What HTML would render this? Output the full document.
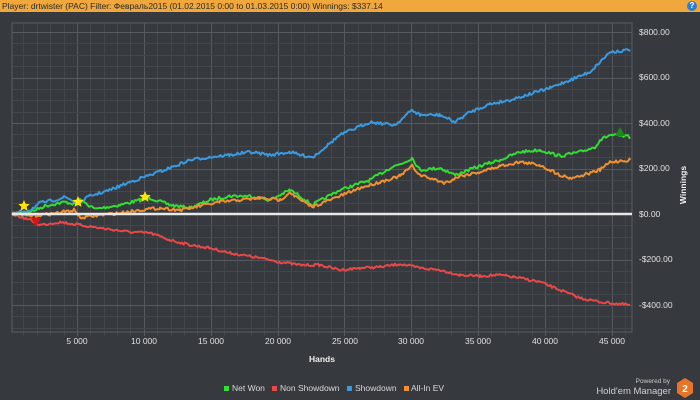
<!DOCTYPE html>
<html><head><meta charset="utf-8"><style>
html,body{margin:0;padding:0;width:700px;height:400px;overflow:hidden;background:#36393d;font-family:"Liberation Sans",sans-serif}
#bar{position:absolute;left:0;top:0;width:700px;height:12px;background:#f0a83c;font-size:8.5px;line-height:12px;color:#2a2a2a;padding-left:2px;white-space:nowrap}
#help{position:absolute;right:3px;top:1px;width:10px;height:10px;border-radius:50%;background:#2f7fd0;color:#fff;font-size:8px;line-height:10px;text-align:center;font-weight:bold}
svg{position:absolute;left:0;top:0}
</style></head><body>
<div id="bar">Player: drtwister (PAC) Filter: Февраль2015 (01.02.2015 0:00 to 01.03.2015 0:00) Winnings: $337.14</div>
<div id="help">?</div>
<svg width="700" height="400" id="s">
<g id="grid"></g>
<rect x="12" y="23" width="620" height="309" fill="none" stroke="#5a5e62" stroke-width="1"/>
<g id="lines" fill="none" stroke-width="2" stroke-linejoin="round"></g>
<line x1="12" y1="214" x2="632" y2="214" stroke="#e8e8e8" stroke-width="2.5"/>
<g fill="#ffe600">
<polygon id="st1" points=""/><polygon id="st2" points=""/><polygon id="st3" points=""/>
</g>
<polygon points="31,218 41,218 36,227" fill="#d01818"/>
<polygon points="615,136 625,136 620,127" fill="#1a8a1a"/>
<g fill="#e0e0e0" font-size="8.5" text-anchor="middle">
<text x="77" y="344">5 000</text><text x="144" y="344">10 000</text><text x="211" y="344">15 000</text><text x="278" y="344">20 000</text><text x="345" y="344">25 000</text><text x="411" y="344">30 000</text><text x="478" y="344">35 000</text><text x="545" y="344">40 000</text><text x="612" y="344">45 000</text>
</g>
<text x="322" y="362" fill="#f0f0f0" font-size="8.5" font-weight="bold" text-anchor="middle">Hands</text>
<g fill="#e0e0e0" font-size="8.5">
<text x="639" y="35">$800.00</text><text x="639" y="80">$600.00</text><text x="639" y="126">$400.00</text><text x="639" y="171">$200.00</text><text x="639" y="217">$0.00</text><text x="639" y="262">-$200.00</text><text x="639" y="308">-$400.00</text>
</g>
<text transform="translate(686,185) rotate(-90)" fill="#f0f0f0" font-size="8.5" font-weight="bold" text-anchor="middle">Winnings</text>
<g font-size="8.5" fill="#d8d8d8">
<rect x="224" y="386" width="5" height="5" fill="#33dd33"/><text x="232" y="391">Net Won</text>
<rect x="272" y="386" width="5" height="5" fill="#e84848"/><text x="280" y="391">Non Showdown</text>
<rect x="347" y="386" width="5" height="5" fill="#3a9ae0"/><text x="355" y="391">Showdown</text>
<rect x="404" y="386" width="5" height="5" fill="#f09030"/><text x="411" y="391">All-In EV</text>
</g>
<text x="670" y="383" fill="#c8c8c8" font-size="6.5" text-anchor="end">Powered by</text>
<text x="671" y="394" fill="#d0d0d0" font-size="9.5" text-anchor="end">Hold'em Manager</text>
<polygon points="685,378 693,383 693,393 685,398 677,393 677,383" fill="#e8742a"/>
<text x="685" y="392" fill="#fff" font-size="10" font-weight="bold" text-anchor="middle">2</text>
</svg>
<script>
var NS="http://www.w3.org/2000/svg";
var g=document.getElementById('grid');
function ln(x1,y1,x2,y2,c){var l=document.createElementNS(NS,'line');l.setAttribute('x1',x1);l.setAttribute('y1',y1);l.setAttribute('x2',x2);l.setAttribute('y2',y2);l.setAttribute('stroke',c);l.setAttribute('stroke-width',1);g.appendChild(l);}
for(var i=1;i<=46;i++){var x=Math.round(10.1+i*13.37)+0.5;if(x>632)break;ln(x,23,x,336,i%5==0?'#565a5e':'#43474b');}
for(var v=-500;v<=850;v+=50){var y=Math.round(214-v*0.2275)+0.5;if(y<23||y>332)continue;ln(12,y,632,y,v%200==0?'#565a5e':'#43474b');}
var seed=7;function rnd(){seed=(seed*16807)%2147483647;return seed/2147483647;}
function line(pts,col,amp){var s='';var y0=null;for(var k=0;k<pts.length-1;k++){var a=pts[k],b=pts[k+1];for(var x=a[0];x<b[0];x+=1.5){var t=(x-a[0])/(b[0]-a[0]);var y=a[1]+(b[1]-a[1])*t+(rnd()-0.5)*amp;s+=x.toFixed(1)+','+y.toFixed(1)+' ';}}
var p=pts[pts.length-1];s+=p[0]+','+p[1];var e=document.createElementNS(NS,'polyline');e.setAttribute('points',s);e.setAttribute('stroke',col);document.getElementById('lines').appendChild(e);}
line([[12,214],[30,212],[45,206],[55,204],[65,202],[75,204],[80,200],[95,209],[120,205],[140,200],[150,198],[170,205],[190,208],[210,200],[230,196],[250,196],[270,200],[290,190],[300,196],[312,205],[340,190],[370,180],[390,168],[405,162],[412,158],[420,170],[440,168],[455,175],[480,166],[500,160],[520,152],[540,150],[560,156],[580,152],[595,147],[600,140],[610,135],[630,137]],'#33dd33',3);
line([[12,214],[30,220],[40,225],[60,222],[80,225],[100,228],[130,232],[150,233],[170,240],[190,245],[210,248],[230,253],[260,258],[280,262],[300,265],[320,265],[340,270],[360,268],[380,267],[400,264],[420,268],[440,270],[460,275],[480,276],[500,275],[520,278],[540,282],[560,290],[580,298],[600,302],[630,305]],'#e84848',2.5);
line([[12,214],[30,210],[40,203],[55,200],[65,197],[78,203],[90,196],[110,190],[130,182],[150,175],[170,168],[190,160],[210,157],[230,155],[250,152],[270,155],[290,152],[300,155],[313,157],[340,135],[370,122],[395,125],[412,110],[420,115],[440,115],[455,122],[470,112],[490,104],[510,100],[530,94],[550,88],[570,80],[590,72],[600,62],[610,52],[630,50]],'#3a9ae0',3);
line([[12,214],[30,216],[50,214],[75,210],[80,218],[100,215],[120,213],[140,210],[160,208],[180,210],[200,206],[220,202],[240,200],[260,198],[280,200],[290,192],[300,200],[312,207],[340,196],[360,188],[380,182],[400,176],[412,166],[420,175],[445,183],[460,176],[480,172],[500,166],[520,162],[540,165],[560,175],[570,178],[580,176],[600,170],[610,162],[630,160]],'#f09030',3);
function star(id,cx,cy,r){var s='';for(var i=0;i<10;i++){var a=-Math.PI/2+i*Math.PI/5;var rr=i%2?r*0.45:r;s+=(cx+rr*Math.cos(a)).toFixed(1)+','+(cy+rr*Math.sin(a)).toFixed(1)+' ';}document.getElementById(id).setAttribute('points',s);}
star('st1',24,206,6);star('st2',78,202,6);star('st3',145,197,6);
</script>
</body></html>
